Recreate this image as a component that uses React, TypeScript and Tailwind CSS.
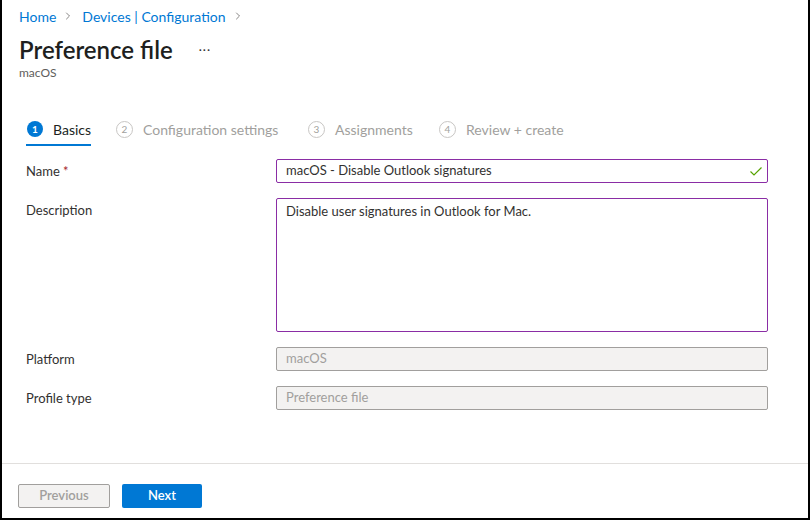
import React from 'react';
import { ChevronRight } from 'lucide-react';

const steps = [
  { n: 1, label: 'Basics', w: 'w-[89px]' },
  { n: 2, label: 'Configuration settings', w: 'w-[192px]' },
  { n: 3, label: 'Assignments', w: 'w-[131px]' },
  { n: 4, label: 'Review + create', w: 'w-[140px]' },
];

const App: React.FC = () => {
  return (
    <div className="w-[810px] h-[520px] bg-white border-l-2 border-r-2 border-b-2 border-black flex flex-col font-['Lato','Liberation_Sans',sans-serif] text-[#323130]">
      <div className="flex-1 flex flex-col">
        {/* header */}
        <div className="pl-[17px] pt-[6px]">
          <div className="flex items-center h-[20px] text-[14px] text-[#0078d4]">
            <span>Home</span>
            <ChevronRight className="ml-[6px] mr-[8px] h-[12px] w-[12px] text-[#605e5c]" strokeWidth={1.5} />
            <span>Devices | Configuration</span>
            <ChevronRight className="ml-[6px] h-[12px] w-[12px] text-[#605e5c]" strokeWidth={1.5} />
          </div>
          <div className="flex items-center mt-[10px] h-[28px]">
            <h1 className="text-[24px] leading-[28px] font-semibold text-[#201f1e]">Preference file</h1>
            <span className="ml-[26px] text-[12px] leading-none text-[#323130] tracking-[1px]">···</span>
          </div>
          <div className="mt-[1px] text-[12px] leading-[16px] text-[#605e5c]">macOS</div>
        </div>

        {/* wizard steps */}
        <div className="flex pl-[25px] mt-[36px]">
          {steps.map((s) => (
            <div key={s.n} className={`${s.w} flex flex-col`}>
              <div className="flex items-center h-[24px] self-start">
                {s.n === 1 ? (
                  <span className="w-[16px] h-[16px] rounded-full bg-[#0078d4] text-white text-[10px] font-bold flex items-center justify-center">
                    1
                  </span>
                ) : (
                  <span className="w-[17px] h-[17px] rounded-full border border-[#c8c6c4] text-[#a19f9d] text-[10px] flex items-center justify-center">
                    {s.n}
                  </span>
                )}
                <span className={`ml-[10px] text-[14px] ${s.n === 1 ? 'text-[#201f1e]' : 'text-[#a19f9d]'}`}>{s.label}</span>
              </div>
              {s.n === 1 && <div className="mt-[3px] h-[2px] w-[65px] -ml-[1px] bg-[#0078d4]" />}
            </div>
          ))}
        </div>

        {/* form */}
        <div className="flex flex-col gap-[15px] pl-[24px] mt-[13px] text-[13px]">
          <div className="flex items-center">
            <div className="w-[250px] leading-[24px]">
              Name <span className="text-[#a4262c]">*</span>
            </div>
            <div className="w-[492px] h-[24px] border border-[#8a2da5] rounded-[2px] flex items-center pl-[9px] pr-[4px]">
              <span className="flex-1 text-[#323130]">macOS - Disable Outlook signatures</span>
              <svg width="14" height="14" viewBox="0 0 14 14">
                <path d="M1.5 7.5 L5 11 L12.5 3.5" fill="none" stroke="#57a300" strokeWidth="1.2" />
              </svg>
            </div>
          </div>

          <div className="flex items-start">
            <div className="w-[250px] leading-[24px]">Description</div>
            <div className="w-[492px] h-[134px] border border-[#8a2da5] rounded-[2px] pl-[9px] leading-[24px]">
              Disable user signatures in Outlook for Mac.
            </div>
          </div>

          <div className="flex items-center">
            <div className="w-[250px] leading-[24px]">Platform</div>
            <div className="w-[492px] h-[24px] border border-[#a19f9d] bg-[#f3f2f1] rounded-[2px] flex items-center pl-[9px] text-[#a19f9d]">
              macOS
            </div>
          </div>

          <div className="flex items-center">
            <div className="w-[250px] leading-[24px]">Profile type</div>
            <div className="w-[492px] h-[24px] border border-[#a19f9d] bg-[#f3f2f1] rounded-[2px] flex items-center pl-[9px] text-[#a19f9d]">
              Preference file
            </div>
          </div>
        </div>
      </div>

      {/* footer */}
      <div className="border-t border-[#e1dfdd] pt-[20px] pb-[10px] pl-[16px] flex gap-[12px]">
        <button className="w-[92px] h-[24px] border border-[#a19f9d] bg-[#f3f2f1] rounded-[2px] text-[13px] font-semibold text-[#a19f9d]">
          Previous
        </button>
        <button className="w-[80px] h-[24px] bg-[#0078d4] rounded-[2px] text-[13px] font-semibold text-white">
          Next
        </button>
      </div>
    </div>
  );
};

export default App;
